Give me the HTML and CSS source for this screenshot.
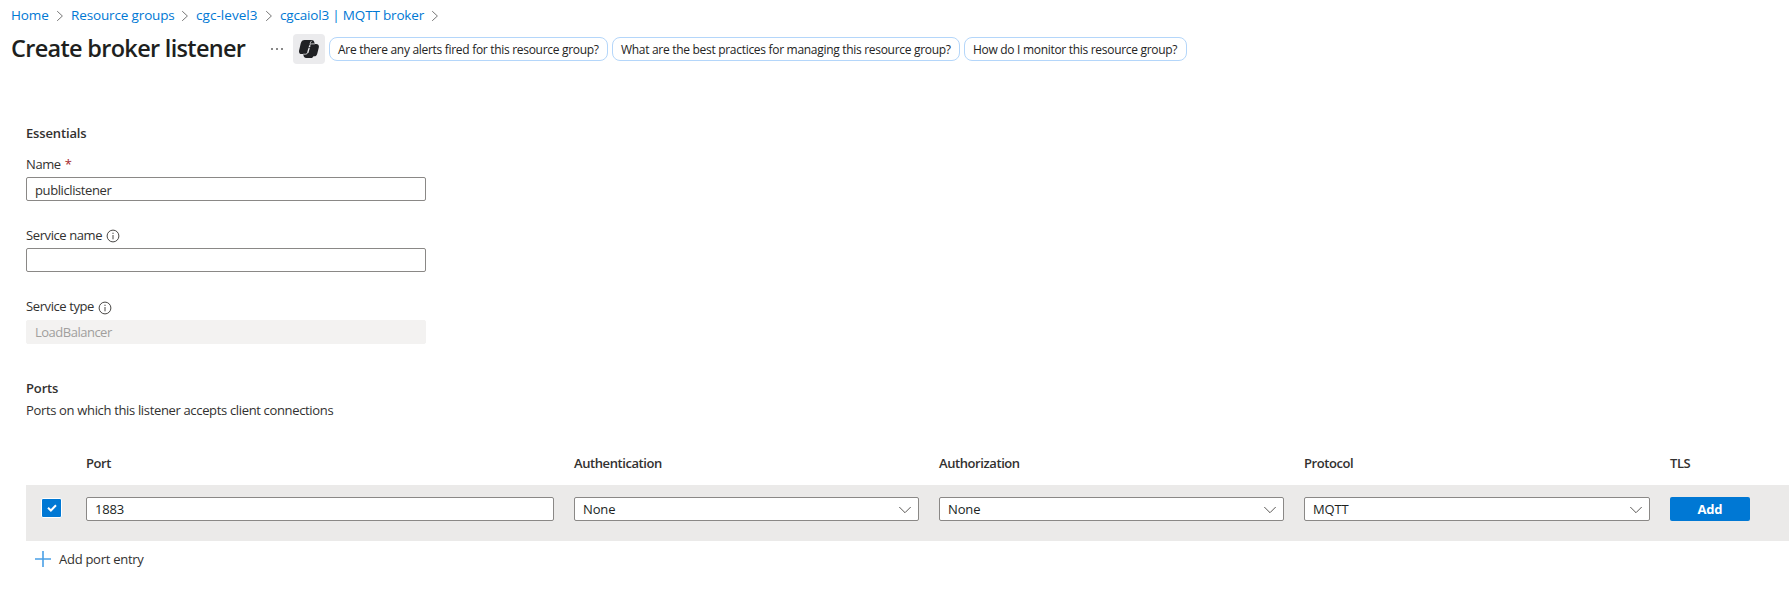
FILE: index.html
```
<!DOCTYPE html>
<html lang="en">
<head>
<meta charset="utf-8">
<title>Create broker listener</title>
<link rel="stylesheet" href="styles.css">
</head>
<body>
<svg class="defs" aria-hidden="true">
  <symbol id="sep" viewBox="0 0 8 12"><path d="M1.2 1.2 6.4 6 1.2 10.8" fill="none" stroke="#777" stroke-width="1"/></symbol>
  <symbol id="down" viewBox="0 0 14 8"><path d="M1.3 1 7 6.7 12.7 1" fill="none" stroke="#5a5856" stroke-width="1"/></symbol>
  <symbol id="info" viewBox="0 0 14 14"><circle cx="7" cy="7" r="5.9" fill="none" stroke="#4a4846" stroke-width="1"/><path d="M7 6v4.3M7 3.7v1.3" stroke="#4a4846" stroke-width="1"/></symbol>
</svg>
<nav class="breadcrumb">
  <a class="crumb crumb-home">Home</a><svg class="sep"><use href="#sep"/></svg>
  <a class="crumb crumb-groups">Resource groups</a><svg class="sep"><use href="#sep"/></svg>
  <a class="crumb crumb-level">cgc-level3</a><svg class="sep"><use href="#sep"/></svg>
  <a class="crumb crumb-broker">cgcaiol3 | MQTT broker</a><svg class="sep"><use href="#sep"/></svg>
</nav>
<header class="title-bar">
  <h1 class="title">Create broker listener</h1>
  <div class="more"><i></i><i></i><i></i></div>
  <div class="copilot">
    <svg viewBox="0 0 20 18" width="20" height="18"><path fill="#202124" d="M5.600 0h7.200c1.400 0 2.100.9 2.500 2.200l.5 1.700h1.400c2.200 0 3 1.600 2.600 3.500l-1.500 6c-.5 2-1.500 2.800-3.200 2.800h-.7c-.4 1.100-1.200 1.800-2.400 1.800H7.100c-1.500 0-2.100-.9-2.500-2.200l-.5-1.700H2.700C.6 14.100-.3 12.600.1 10.600l1.600-7C2.300 1 3.600 0 5.600 0z"/><path fill="none" stroke="#ececee" stroke-width=".8" d="M12.600.8c-.9.700-1.200 1.900-1.600 3.400M15.800 3.900h-3c-1.100 0-1.700.5-2 1.500M4.200 14.200h2.400c1.100 0 1.700-.5 2-1.500"/><path fill="none" stroke="#ececee" stroke-width="1.400" d="M10.900 5.400 8.700 12.900"/><path fill="none" stroke="#202124" stroke-width=".8" d="M9.200 7.600h2.600"/></svg>
  </div>
  <div class="pill pill-alerts"><span>Are there any alerts fired for this resource group?</span></div>
  <div class="pill pill-practices"><span>What are the best practices for managing this resource group?</span></div>
  <div class="pill pill-monitor"><span>How do I monitor this resource group?</span></div>
</header>
<main class="content">
  <h2 class="section-title">Essentials</h2>
  <div class="field">
    <div class="label"><span>Name</span><span class="required">*</span></div>
    <div class="input"><span>publiclistener</span></div>
  </div>
  <div class="field">
    <div class="label"><span>Service name</span><svg class="info"><use href="#info"/></svg></div>
    <div class="input"></div>
  </div>
  <div class="field field-type">
    <div class="label"><span>Service type</span><svg class="info"><use href="#info"/></svg></div>
    <div class="input disabled"><span>LoadBalancer</span></div>
  </div>
  <h2 class="section-title ports-title">Ports</h2>
  <p class="description">Ports on which this listener accepts client connections</p>
  <div class="grid head">
    <span></span><span>Port</span><span>Authentication</span><span>Authorization</span><span>Protocol</span><span>TLS</span>
  </div>
  <div class="grid row">
    <div class="check"><svg viewBox="0 0 10 8" width="10" height="8"><path d="M1 3.700 3.900 6.500 9 1.300" fill="none" stroke="#fff" stroke-width="2"/></svg></div>
    <div class="input"><span>1883</span></div>
    <div class="input select"><span>None</span><svg class="down"><use href="#down"/></svg></div>
    <div class="input select"><span>None</span><svg class="down"><use href="#down"/></svg></div>
    <div class="input select"><span>MQTT</span><svg class="down"><use href="#down"/></svg></div>
    <div class="button">Add</div>
  </div>
  <div class="add-entry">
    <svg viewBox="0 0 16 16" width="16" height="16"><path d="M8 0v16M0 8h16" stroke="#4aa0e6" stroke-width="1.600"/></svg>
    <span>Add port entry</span>
  </div>
</main>
</body>
</html>
```
FILE: styles.css
```
* { box-sizing: border-box; }
body {
  margin: 0;
  background: #fff;
  color: #323130;
  font: 13px/20px "Open Sans", "Noto Sans", sans-serif;
  letter-spacing: -0.34px;
  white-space: nowrap;
  overflow: hidden;
}
.defs { position: absolute; width: 0; height: 0; }
h1, h2, p { margin: 0; }

.breadcrumb { display: flex; align-items: center; height: 20px; margin: 5px 0 0 11px; font-size: 13.5px; letter-spacing: -0.14px; }
.crumb { color: #0078d4; }
.crumb-home { width: 45px; }
.crumb-groups { width: 110px; }
.crumb-level { width: 69px; letter-spacing: 0.05px; }
.crumb-broker { width: 151px; letter-spacing: -0.18px; }
.sep { width: 8px; height: 12px; margin-top: 2px; margin-right: 7px; flex: none; }

.title-bar { display: flex; align-items: center; height: 30px; margin: 9px 0 0 11px; }
.title { width: 260px; font-size: 23.5px; line-height: 28px; height: 30px; font-weight: 600; letter-spacing: -0.69px; color: #201f1e; }
.more { display: flex; gap: 3px; width: 22px; }
.more i { width: 2px; height: 2px; background: #888; }
.copilot { display: flex; align-items: center; justify-content: center; width: 32px; height: 30px; margin-right: 4px; border-radius: 4px; background: #ebebed; }
.pill { height: 24px; margin-right: 4px; padding-left: 8px; border: 1px solid #b4d6fa; border-radius: 8px; font-size: 12px; line-height: 23px; letter-spacing: -0.3px; color: #242424; }
.pill-alerts { width: 279px; }
.pill-practices { width: 348px; }
.pill-monitor { width: 223px; }

.content { padding: 59px 0 0 26px; }
.section-title { font-size: 13px; line-height: 20px; font-weight: 600; letter-spacing: -0.14px; }
.field { margin-top: 11px; height: 60px; }
.label { display: flex; height: 20px; letter-spacing: -0.4px; }
.required { margin-left: 4px; color: #a4262c; }
.info { width: 14px; height: 14px; margin: 4px 0 0 4px; }
.input { display: flex; align-items: center; width: 400px; height: 24px; margin-top: 3px; padding: 2px 8px 0; border: 1px solid #8a8886; border-radius: 2px; background: #fff; letter-spacing: -0.4px; }
.field-type .info { margin-top: 5px; }
.field-type .input { margin-top: 4px; padding-top: 0; letter-spacing: -0.5px; }
.disabled { background: #f3f2f1; border-color: #f3f2f1; color: #a19f9d; }
.ports-title { margin-top: 22px; }
.description { margin-top: 2px; }

.grid { display: grid; grid-template-columns: 40px 468px 345px 345px 346px 80px; column-gap: 20px; }
.head { height: 20px; margin-top: 33px; font-weight: 600; letter-spacing: -0.42px; }
.row { height: 56px; margin-top: 12px; padding-top: 12px; background: #ebeae9; color: #201f1e; }
.row .input { width: auto; margin: 0; padding-top: 0; letter-spacing: -0.15px; }
.select { justify-content: space-between; }
.down { width: 14px; height: 8px; margin-right: -2px; margin-top: 2px; }
.check { display: flex; align-items: center; justify-content: center; width: 21px; height: 20px; margin: 1px 0 0 15px; border: 1px solid #fff; border-radius: 2px; background: #0078d4; }
.button { height: 24px; border-radius: 2px; background: #0078d4; color: #fff; font-weight: 700; line-height: 24px; text-align: center; letter-spacing: -0.2px; }
.add-entry { display: flex; align-items: center; gap: 8px; height: 20px; margin: 8px 0 0 9px; letter-spacing: -0.27px; }
```
